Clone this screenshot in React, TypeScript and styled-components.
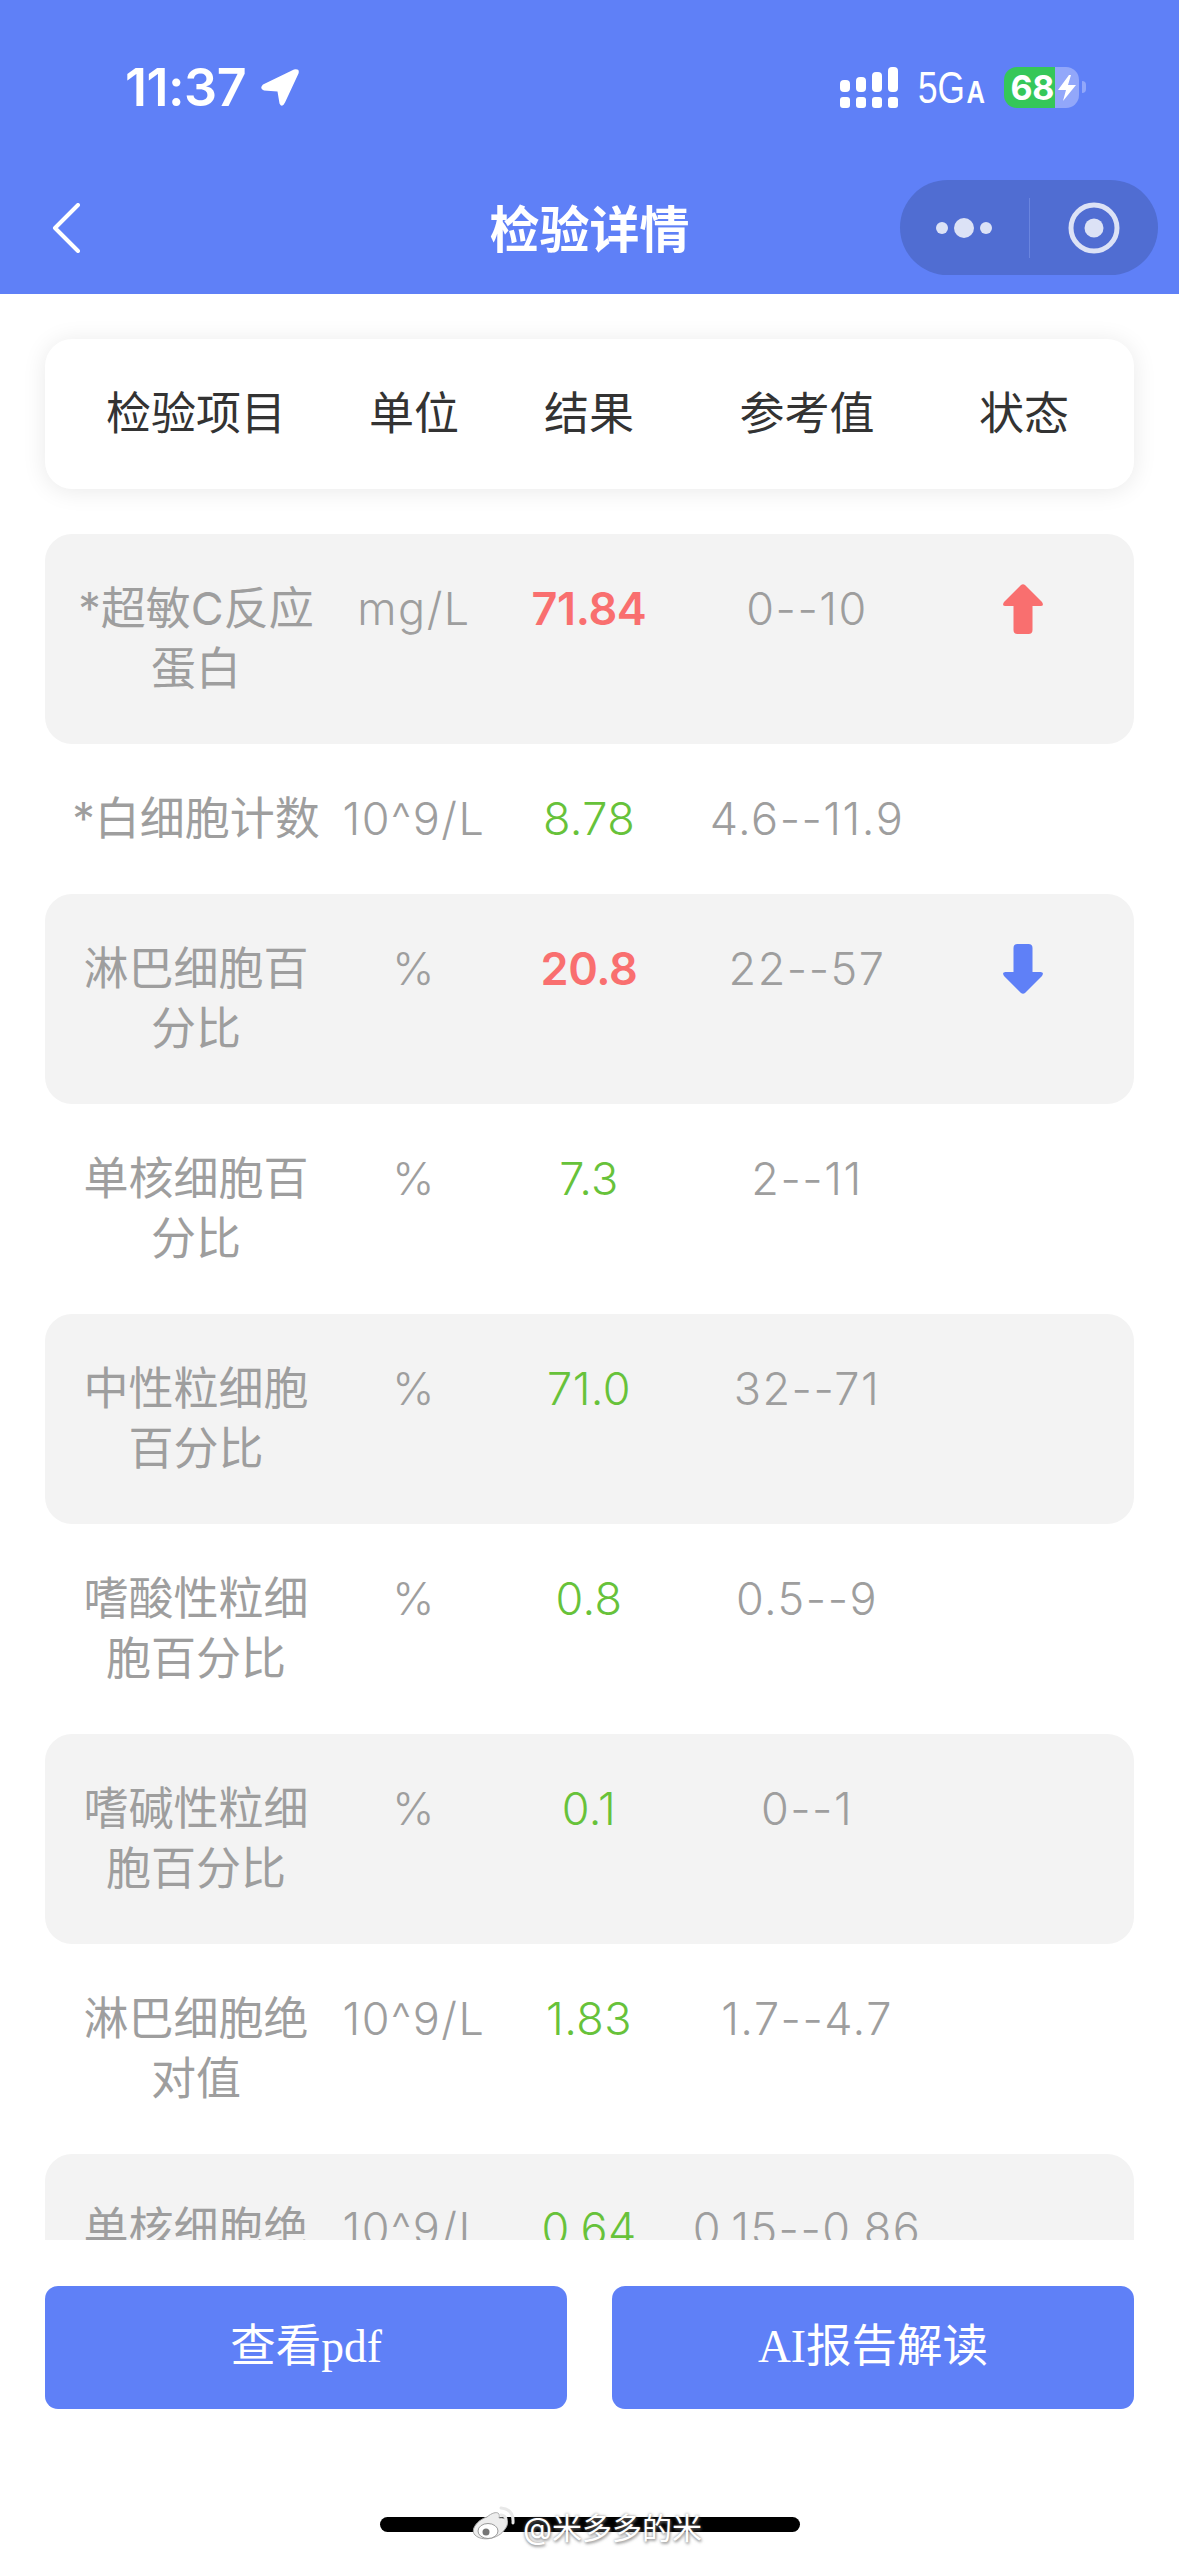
import React from "react";
import styled, { createGlobalStyle } from "styled-components";

const Global = createGlobalStyle`
  html, body { margin: 0; padding: 0; background: #fff; }
  * { box-sizing: border-box; }
`;

const SANS = `Inter, "Noto Sans CJK SC", sans-serif`;
const BLUE = "#5F80F7";

const Page = styled.div`
  position: relative;
  width: 1179px;
  height: 2556px;
  overflow: hidden;
  background: #fff;
  font-family: ${SANS};
`;
const Header = styled.header`
  height: 294px;
  background: ${BLUE};
  color: #fff;
  display: flex;
  flex-direction: column;
`;
const StatusBar = styled.div`
  height: 180px;
  padding: 67px 0 0 125px;
  display: flex;
  align-items: flex-start;
`;
const Time = styled.div`
  width: 135px;
  font-size: 52px;
  line-height: 42px;
  font-weight: 600;
  letter-spacing: -0.5px;
`;
const Gap = styled.div`
  flex: 1;
`;
const NetLabel = styled.div`
  margin-left: 20px;
  width: 86px;
  font-family: "Liberation Sans", sans-serif;
  font-size: 44px;
  line-height: 42px;
  white-space: nowrap;
  transform: scaleX(0.8);
  transform-origin: left center;
  small {
    font-size: 32px;
    font-weight: 700;
    margin-left: 2px;
  }
`;
const Battery = styled.div`
  display: flex;
  width: 75px;
  height: 41px;
  border-radius: 13px;
  overflow: hidden;
`;
const BatteryFill = styled.div`
  width: 51px;
  background: #35C759;
  font-size: 34px;
  line-height: 41px;
  font-weight: 700;
  text-align: right;
  padding-right: 1px;
  letter-spacing: -0.3px;
`;
const BatteryRest = styled.div`
  flex: 1;
  background: #92A7FA;
  display: flex;
  align-items: center;
  justify-content: center;
`;
const BatteryTip = styled.div`
  width: 4px;
  height: 12px;
  margin: 14px 93px 0 3px;
  background: #92A7FA;
  border-radius: 0 4px 4px 0;
`;
const NavBar = styled.div`
  position: relative;
  height: 114px;
  display: flex;
  align-items: flex-start;
  justify-content: space-between;
  padding: 0 21px 0 52px;
`;
const Back = styled.svg`
  margin-top: 23px;
  width: 28px;
  height: 50px;
`;
const Title = styled.div`
  position: absolute;
  left: 0;
  right: 0;
  top: 18px;
  text-align: center;
  font-size: 50px;
  line-height: 64px;
  font-weight: 700;
`;
const Capsule = styled.div`
  width: 258px;
  height: 95px;
  border-radius: 48px;
  background: #506DD2;
  display: flex;
  align-items: center;
`;
const CapsuleHalf = styled.div`
  flex: 1;
  display: flex;
  align-items: center;
  justify-content: center;
`;
const CapsuleRule = styled.div`
  width: 1px;
  height: 60px;
  background: #6A85DF;
`;
const Content = styled.main`
  padding: 45px 45px 0;
`;
const grid = `
  display: grid;
  grid-template-columns: 250px 186px 164px 272px 162px;
  padding: 45px 29px 45px 26px;
  text-align: center;
  font-size: 45px;
  line-height: 60px;
`;
const HeaderCard = styled.div`
  ${grid}
  height: 150px;
  border-radius: 27px;
  background: #fff;
  color: #333;
  box-shadow: 0 2px 24px rgba(0, 0, 0, 0.09);
`;
const List = styled.div`
  margin-top: 45px;
  height: 1706px;
  overflow: hidden;
`;
const Row = styled.div<{ $alt: boolean }>`
  ${grid}
  border-radius: 27px;
  background: ${(p) => (p.$alt ? "#F3F3F3" : "#fff")};
  color: #9E9E9E;
`;
const Name = styled.div`
  word-break: break-all;
`;
const Cell = styled.div`
  white-space: nowrap;
  font-weight: 300;
  letter-spacing: 1.5px;
`;
const Result = styled.div<{ $flag: string }>`
  color: ${(p) => (p.$flag ? "#F96F6F" : "#67C23A")};
  font-weight: ${(p) => (p.$flag ? 600 : 300)};
  letter-spacing: ${(p) => (p.$flag ? "-0.4px" : "0.4px")};
`;
const StatusIcon = styled.svg`
  display: block;
  margin: 5px auto 0;
  position: relative;
  left: -1px;
  width: 40px;
  height: 50px;
`;
const Buttons = styled.div`
  margin-top: 46px;
  display: flex;
  gap: 45px;
`;
const Button = styled.div`
  flex: 1;
  height: 123px;
  border-radius: 13px;
  background: ${BLUE};
  color: #fff;
  font-family: "Liberation Serif", "Noto Sans CJK SC", serif;
  font-size: 45.5px;
  line-height: 121px;
  text-align: center;
`;
const HomeBar = styled.div`
  position: absolute;
  left: 380px;
  top: 2517px;
  width: 420px;
  height: 15px;
  border-radius: 8px;
  background: #000;
`;
const Watermark = styled.div`
  position: absolute;
  left: 472px;
  top: 2506px;
  display: flex;
  align-items: flex-start;
  gap: 7px;
  color: #fff;
  font-size: 30px;
  line-height: 40px;
  text-shadow: 0 0 3px rgba(110, 110, 110, 0.8), 1px 2px 3px rgba(110, 110, 110, 0.6);
  span {
    margin-top: 2px;
  }
`;

const rows: [string, string, string, string, string][] = [
  ["*超敏C反应蛋白", "mg/L", "71.84", "0--10", "up"],
  ["*白细胞计数", "10^9/L", "8.78", "4.6--11.9", ""],
  ["淋巴细胞百分比", "%", "20.8", "22--57", "down"],
  ["单核细胞百分比", "%", "7.3", "2--11", ""],
  ["中性粒细胞百分比", "%", "71.0", "32--71", ""],
  ["嗜酸性粒细胞百分比", "%", "0.8", "0.5--9", ""],
  ["嗜碱性粒细胞百分比", "%", "0.1", "0--1", ""],
  ["淋巴细胞绝对值", "10^9/L", "1.83", "1.7--4.7", ""],
  ["单核细胞绝对值", "10^9/L", "0.64", "0.15--0.86", ""],
];

function Arrow({ dir }: { dir: string }) {
  return (
    <StatusIcon viewBox="0 0 40 50">
      {dir === "up" ? (
        <path d="M18 1 Q20 -0.5 22 1 L39 18 Q41.5 22 37.5 22 L29.5 22 L29.5 46 Q29.5 50 25.5 50 L14.5 50 Q10.5 50 10.5 46 L10.5 22 L2.5 22 Q-1.5 22 1 18 Z" fill="#F96F6F" />
      ) : (
        <path d="M18 49 Q20 50.5 22 49 L39 32 Q41.5 28 37.5 28 L29.5 28 L29.5 4 Q29.5 0 25.5 0 L14.5 0 Q10.5 0 10.5 4 L10.5 28 L2.5 28 Q-1.5 28 1 32 Z" fill={BLUE} />
      )}
    </StatusIcon>
  );
}

export default function App() {
  return (
    <Page>
      <Global />
      <Header>
        <StatusBar>
          <Time>11:37</Time>
          <svg width="40" height="41" viewBox="0 0 40 40">
            <path d="M34 2 Q40 1 38.5 6 L25 35 Q22 41 19.5 36 L17.5 24 L4 23 Q-1 21 3 17 Z" fill="#fff" />
          </svg>
          <Gap />
          <svg width="58" height="41" viewBox="0 0 58 41" fill="#fff">
            <rect x="0" y="13" width="10" height="12" rx="4" />
            <rect x="16" y="10" width="10" height="15" rx="4" />
            <rect x="32" y="5" width="10" height="20" rx="4" />
            <rect x="48" y="0" width="10" height="25" rx="4" />
            <rect x="0" y="30" width="10" height="11" rx="3" />
            <rect x="16" y="30" width="10" height="11" rx="3" />
            <rect x="32" y="30" width="10" height="11" rx="3" />
            <rect x="48" y="30" width="10" height="11" rx="3" />
          </svg>
          <NetLabel>5G<small>A</small></NetLabel>
          <Battery>
            <BatteryFill>68</BatteryFill>
            <BatteryRest>
              <svg width="18" height="26" viewBox="0 0 18 26">
                <path d="M11 0 L0 15 L8 15 L5 26 L18 10 L10 10 L13 0 Z" fill="#fff" />
              </svg>
            </BatteryRest>
          </Battery>
          <BatteryTip />
        </StatusBar>
        <NavBar>
          <Back viewBox="0 0 28 50">
            <path d="M26 2 L3 25 L26 48" fill="none" stroke="#fff" strokeWidth="4" strokeLinecap="round" strokeLinejoin="round" />
          </Back>
          <Title>检验详情</Title>
          <Capsule>
            <CapsuleHalf>
              <svg width="56" height="22" viewBox="0 0 56 22" fill="#DCE2F6">
                <circle cx="6" cy="11" r="6" />
                <circle cx="28" cy="11" r="10" />
                <circle cx="50" cy="11" r="6" />
              </svg>
            </CapsuleHalf>
            <CapsuleRule />
            <CapsuleHalf>
              <svg width="52" height="52" viewBox="0 0 52 52">
                <circle cx="26" cy="26" r="23" fill="none" stroke="#DCE2F6" strokeWidth="5" />
                <circle cx="26" cy="26" r="9.5" fill="#DCE2F6" />
              </svg>
            </CapsuleHalf>
          </Capsule>
        </NavBar>
      </Header>
      <Content>
        <HeaderCard>
          <div>检验项目</div>
          <div>单位</div>
          <div>结果</div>
          <div>参考值</div>
          <div>状态</div>
        </HeaderCard>
        <List>
          {rows.map(([name, unit, result, ref, flag], i) => (
            <Row key={name} $alt={i % 2 === 0}>
              <Name>{name}</Name>
              <Cell>{unit}</Cell>
              <Result $flag={flag}>{result}</Result>
              <Cell>{ref}</Cell>
              <div>{flag && <Arrow dir={flag} />}</div>
            </Row>
          ))}
        </List>
        <Buttons>
          <Button>查看pdf</Button>
          <Button>AI报告解读</Button>
        </Buttons>
      </Content>
      <HomeBar />
      <Watermark>
        <svg width="44" height="36" viewBox="0 0 44 36">
          <path d="M15 11 C22 5 29 5 27 12 C35 11 38 17 33 23 C27 33 10 36 3 29 C-2 24 5 14 15 11 Z" fill="#EDEDED" stroke="#A8A8A8" strokeWidth="1" />
          <ellipse cx="16" cy="25" rx="10" ry="7.5" fill="#fff" stroke="#999" strokeWidth="1" />
          <circle cx="14" cy="26" r="3.5" fill="#777" />
          <path d="M29 2 Q42 3 41 17 M29 9 Q35 10 34 16" fill="none" stroke="#E8E8E8" strokeWidth="3" strokeLinecap="round" />
        </svg>
        <span>@米多多的米</span>
      </Watermark>
    </Page>
  );
}
